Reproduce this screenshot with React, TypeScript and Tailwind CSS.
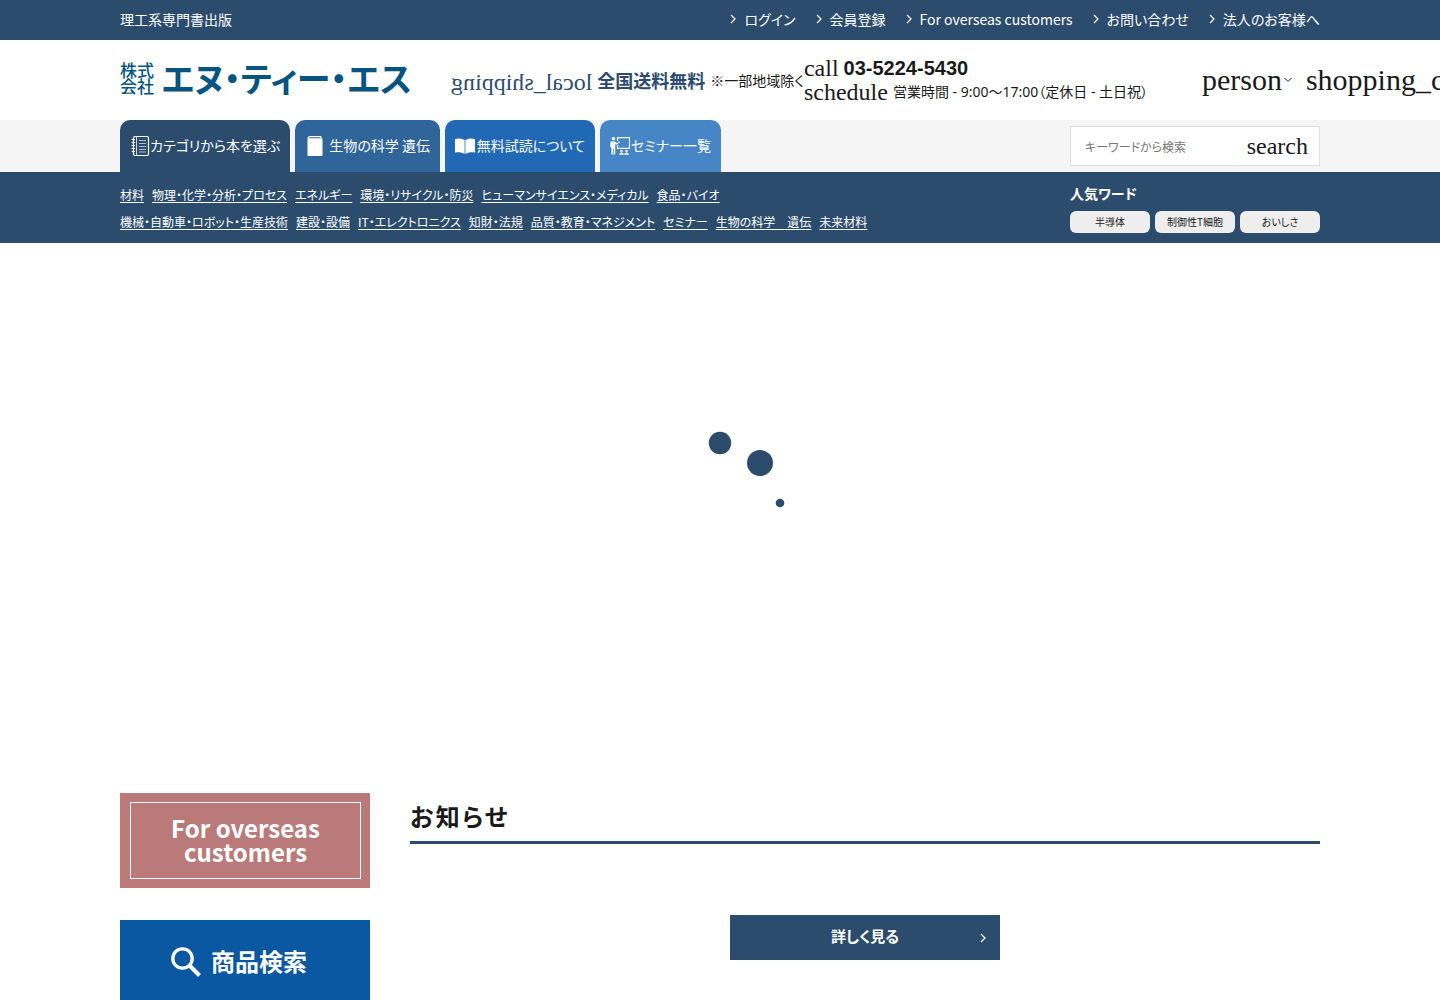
import type { ReactNode } from "react";

function Chevron({ className = "" }: { className?: string }) {
  return (
    <svg viewBox="0 0 6 10" className={className} fill="none" stroke="currentColor" strokeWidth="1.2" aria-hidden="true">
      <path d="M1 1l4 4-4 4" />
    </svg>
  );
}

function NotebookIcon() {
  return (
    <svg viewBox="0 0 20 22" className="h-[22px] w-5 shrink-0" fill="none" stroke="currentColor" aria-hidden="true">
      <rect x="3.5" y="1.5" width="15" height="19" rx="1.5" strokeWidth="1.2" />
      <path d="M6.5 2v18" strokeWidth="0.8" />
      <path d="M1.500 4.500h3.500M1.500 7.500h3.500M1.500 10.500h3.500M1.500 13.500h3.500M1.500 16.500h3.500" strokeWidth="1.2" />
      <path d="M9 5.500h7M9 8.500h7M9 11.500h7M9 14.500h7M9 17h7" strokeWidth="0.8" opacity="0.8" />
    </svg>
  );
}

function BookIcon() {
  return (
    <svg viewBox="0 0 20 22" className="h-[22px] w-5 shrink-0" fill="currentColor" aria-hidden="true">
      <path d="M2.500 3.500C2.500 2 3.500 1 5 1h10.500c.8 0 1 .4 1 1v1.200c.7.100 1 .5 1 1.200V20c0 .7-.4 1-1 1h-13c-.7 0-1-.4-1-1z" />
      <path d="M4 3.200C4.200 2.400 4.600 2.200 5.200 2.200h10.300v1H4z" fill="#2f6598" />
    </svg>
  );
}

function OpenBookIcon() {
  return (
    <svg viewBox="0 0 20 16" className="h-4 w-5 shrink-0" fill="currentColor" aria-hidden="true">
      <path d="M0 1C3.500 0 7 .2 9.600 2v14C7 14.200 3.500 13.800 0 14.500zM20 1C16.500 0 13 .2 10.400 2v14c2.600-1.800 6.100-2.200 9.600-1.500z" />
    </svg>
  );
}

function SeminarIcon() {
  return (
    <svg viewBox="0 0 20 20" className="size-5 shrink-0" fill="currentColor" aria-hidden="true">
      <circle cx="3.500" cy="2.800" r="1.800" />
      <path d="M0.500 5.500h4.200l2 1.800L9.500 5.200l.6.800-3.400 2.800-1.500-.9v10.600H3.900v-6h-.7v6H1.500v-6.500L.3 11z" />
      <path d="M7.500 5V1.600h12v10.800H7.500V9" fill="none" stroke="currentColor" strokeWidth="1.100" />
      <circle cx="11.500" cy="15" r="1.200" />
      <circle cx="16.500" cy="15" r="1.200" />
      <path d="M9.300 18.800c0-3 4.400-3 4.400 0zM14.300 18.800c0-3 4.400-3 4.400 0z" />
    </svg>
  );
}

const topLinks = ["ログイン", "会員登録", "For overseas customers", "お問い合わせ", "法人のお客様へ"];

const categories = [
  ["材料", "物理・化学・分析・プロセス", "エネルギー", "環境・リサイクル・防災", "ヒューマンサイエンス・メディカル", "食品・バイオ"],
  ["機械・自動車・ロボット・生産技術", "建設・設備", "IT・エレクトロニクス", "知財・法規", "品質・教育・マネジメント", "セミナー", "生物の科学　遺伝", "未来材料"],
];

const words = ["半導体", "制御性T細胞", "おいしさ"];

function Tab({ className, icon, children }: { className: string; icon: ReactNode; children: ReactNode }) {
  return (
    <a
      href="#"
      className={`flex h-[52px] items-center justify-between whitespace-nowrap rounded-t-[10px] px-2.5 text-sm text-white ${className}`}
    >
      {icon}
      <span className="pb-0.5">{children}</span>
    </a>
  );
}

export default function App() {
  return (
    <div className="overflow-hidden bg-white font-['Noto_Sans_CJK_JP',sans-serif] text-[#1a1a1a] [font-feature-settings:'palt']">
      <header>
        <div className="bg-[#2c4c6e] text-white">
          <div className="mx-auto flex h-10 max-w-[1200px] items-center justify-between pb-0.5 text-sm">
            <p>理工系専門書出版</p>
            <nav className="flex gap-5">
              {topLinks.map((t) => (
                <a key={t} href="#" className="flex items-center gap-2">
                  <Chevron className="h-2.5 w-1.5" />
                  {t}
                </a>
              ))}
            </nav>
          </div>
        </div>

        <div className="mx-auto flex h-20 max-w-[1200px] items-center whitespace-nowrap">
          <a href="#" className="flex w-[292px] shrink-0 items-center justify-between pb-1 text-[#065480]">
            <span className="text-[17px] font-medium leading-4">
              株式
              <br />
              会社
            </span>
            <span className="text-[34px] font-bold leading-10">エヌ・ティー・エス</span>
          </a>
          <p className="ml-[39px] flex shrink-0 items-center gap-[5px] text-sm">
            <span className="-scale-x-100 pt-1 font-['Liberation_Serif',serif] text-2xl text-[#2c4c6e]">local_shipping</span>
            <strong className="text-lg text-[#2c4c6e]">全国送料無料</strong>
            <span>※一部地域除く</span>
          </p>
          <div className="w-[398px] shrink-0">
            <p className="flex h-6 items-center gap-[5px]">
              <span className="font-['Liberation_Serif',serif] text-2xl">call</span>
              <a href="tel:03-5224-5430" className="font-['Liberation_Sans',sans-serif] text-xl font-bold">03-5224-5430</a>
            </p>
            <p className="flex h-6 items-center gap-[5px] font-['Noto_Sans','Noto_Sans_CJK_JP',sans-serif] text-sm">
              <span className="font-['Liberation_Serif',serif] text-2xl">schedule</span>
              営業時間 - 9:00〜17:00（定休日 - 土日祝）
            </p>
          </div>
          <div className="flex shrink-0 items-center gap-3.5 font-['Liberation_Serif',serif] text-3xl">
            <button type="button" className="flex items-center gap-0.5">
              person
              <svg viewBox="0 0 8 6" className="h-1.5 w-2" fill="none" stroke="currentColor" aria-hidden="true">
                <path d="M.5 1L4 4.500 7.500 1" />
              </svg>
            </button>
            <a href="#">shopping_cart</a>
          </div>
        </div>

        <div className="bg-[#f5f5f5]">
          <div className="mx-auto flex max-w-[1200px] items-center justify-between">
            <nav className="flex gap-[5px]">
              <Tab className="w-[170px] bg-[#2c4c6e]" icon={<NotebookIcon />}>カテゴリから本を選ぶ</Tab>
              <Tab className="w-[145px] bg-[#2f6598]" icon={<BookIcon />}>生物の科学 遺伝</Tab>
              <Tab className="w-[150px] bg-[#2169b4]" icon={<OpenBookIcon />}>無料試読について</Tab>
              <Tab className="w-[121px] bg-[#4686c6]" icon={<SeminarIcon />}>セミナー一覧</Tab>
            </nav>
            <form className="flex h-10 w-[250px] items-center border border-[#dddddd] bg-white">
              <input
                type="text"
                aria-label="キーワードから検索"
                placeholder="キーワードから検索"
                className="h-full min-w-0 flex-1 px-3.5 text-xs outline-none placeholder:text-[#757575]"
              />
              <button type="button" className="px-[11px] font-['Liberation_Serif',serif] text-2xl">search</button>
            </form>
          </div>
        </div>

        <div className="bg-[#2c4c6e] text-white">
          <div className="mx-auto flex h-[71px] max-w-[1200px] items-start justify-between pt-[9px]">
            <div className="text-xs leading-[27px]">
              {categories.map((row) => (
                <ul key={row[0]} className="flex gap-2">
                  {row.map((c) => (
                    <li key={c}>
                      <a href="#" className="underline underline-offset-2">{c}</a>
                    </li>
                  ))}
                </ul>
              ))}
            </div>
            <div className="w-[250px]">
              <h2 className="text-sm font-bold leading-6">人気ワード</h2>
              <ul className="mt-1.5 grid grid-cols-3 gap-[5px]">
                {words.map((w) => (
                  <li key={w}>
                    <a href="#" className="block rounded-md bg-[#eeeeee] text-center text-[10px] leading-[22px] text-[#1a1a1a]">{w}</a>
                  </li>
                ))}
              </ul>
            </div>
          </div>
        </div>
      </header>

      <section className="flex h-[550px] items-start justify-center pt-[180px]" aria-label="読み込み中">
        <svg viewBox="-20 0 140 100" className="h-[100px] w-[140px]" fill="#2c4c6e" aria-hidden="true">
          <circle cx="50" cy="20" r="11.200" />
          <circle cx="90" cy="40" r="13" />
          <circle cx="110" cy="80" r="4.300" />
        </svg>
      </section>

      <main className="mx-auto flex max-w-[1200px] gap-10">
        <aside className="flex w-[250px] shrink-0 flex-col gap-8">
          <a href="#" className="block bg-[#bb7a7a] p-[9px] pl-2.5 text-white">
            <span className="flex h-[77px] items-center justify-center border border-white pb-0.5 text-center text-2xl font-bold leading-6">
              For overseas
              <br />
              customers
            </span>
          </a>
          <a href="#" className="flex h-[84px] items-center justify-center gap-2.5 bg-[#0b58a2] pr-3 text-2xl font-bold text-white">
            <svg viewBox="0 0 30 30" className="size-[30px]" fill="none" stroke="currentColor" aria-hidden="true">
              <circle cx="11.500" cy="11.500" r="9.700" strokeWidth="3.300" />
              <path d="M18.500 18.500l10 10" strokeWidth="4" />
            </svg>
            <span className="pb-0.5">商品検索</span>
          </a>
        </aside>
        <section className="flex min-w-0 flex-1 flex-col items-center">
          <h2 className="w-full border-b-[3px] border-[#2c4c6e] pb-0.5 text-2xl font-bold leading-[46px] tracking-widest">お知らせ</h2>
          <a href="#" className="mt-[71px] flex h-[45px] w-[270px] items-center justify-center bg-[#2c4c6e] text-[15px] font-bold text-white">
            <span className="flex-1 pb-0.5 pl-5 text-center">詳しく見る</span>
            <Chevron className="mr-3.5 h-2.5 w-1.5" />
          </a>
        </section>
      </main>
    </div>
  );
}
